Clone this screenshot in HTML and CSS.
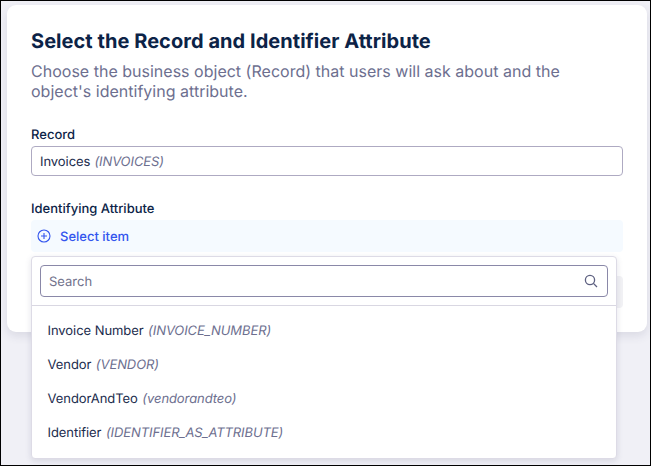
FILE: index.html
```html
<!DOCTYPE html>
<html lang="en">
<head>
<meta charset="utf-8">
<title>Select the Record and Identifier Attribute</title>
<link rel="stylesheet" href="styles.css">
</head>
<body>
<div class="frame">
  <main class="card">
    <h1 class="title">Select the Record and Identifier Attribute</h1>
    <p class="intro">Choose the business object (Record) that users will ask about and the object's identifying attribute.</p>
    <div class="field">
      <label class="label">Record</label>
      <div class="input"><span>Invoices</span> <em>(INVOICES)</em></div>
    </div>
    <div class="field attr">
      <label class="label">Identifying Attribute</label>
      <div class="select-row">
        <svg class="plus" width="14" height="14" viewBox="0 0 14 14" fill="none" stroke="#3355ee" stroke-width="1.1"><circle cx="7" cy="7" r="6"/><path d="M7 4v6M4 7h6"/></svg>
        <span>Select item</span>
      </div>
      <div class="hidden-bar"></div>
    </div>
  </main>
  <div class="dropdown">
    <div class="search-wrap">
      <div class="search">
        <span>Search</span>
        <svg width="14" height="14" viewBox="0 0 14 14" fill="none" stroke="#5d6080" stroke-width="1.3"><circle cx="6" cy="6" r="4.6"/><path d="M9.4 9.4l3.6 3.6"/></svg>
      </div>
    </div>
    <ul class="options">
      <li><span>Invoice Number</span> <em>(INVOICE_NUMBER)</em></li>
      <li><span>Vendor</span> <em>(VENDOR)</em></li>
      <li><span>VendorAndTeo</span> <em>(vendorandteo)</em></li>
      <li><span>Identifier</span> <em>(IDENTIFIER_AS_ATTRIBUTE)</em></li>
    </ul>
  </div>
</div>
</body>
</html>
```
FILE: styles.css
```css
* { box-sizing: border-box; }
html, body { margin: 0; padding: 0; }
body {
  width: 651px;
  height: 466px;
  overflow: hidden;
  font-family: Inter, "Liberation Sans", sans-serif;
  color: #0c2347;
  text-rendering: geometricPrecision;
}
.frame {
  position: relative;
  width: 651px;
  height: 466px;
  border: 1px solid #000;
  background: #f0f0f6;
  padding: 4px 3px 0 6px;
  overflow: hidden;
}
.card {
  height: 327px;
  background: #fff;
  border-radius: 9px;
  padding: 24px 24px 0;
  box-shadow: 0 4px 10px rgba(60, 60, 100, 0.12);
}
.title {
  margin: 0;
  font-size: 20px;
  line-height: 24px;
  font-weight: 700;
  letter-spacing: 0.05px;
  color: #0c2347;
}
.intro {
  margin: 8px 0 0;
  font-size: 16px;
  line-height: 20px;
  letter-spacing: 0.01px;
  color: #6d6f8f;
}
.field { margin-top: 26px; }
.attr { margin-top: 25px; }
.label {
  display: block;
  font-size: 13px;
  line-height: 16px;
  font-weight: 500;
  color: #0c2347;
}
.input {
  margin-top: 3px;
  height: 30px;
  border: 1px solid #aeaac2;
  border-radius: 4px;
  padding: 1px 8px 0;
  display: flex;
  align-items: center;
  gap: 4px;
  font-size: 13px;
  letter-spacing: -0.06px;
  color: #1b2c4d;
}
em {
  font-style: italic;
  letter-spacing: -0.08px;
  color: #6d6f8f;
}
.select-row {
  margin-top: 3px;
  height: 32px;
  background: #f5faff;
  border-radius: 4px;
  padding: 1px 6px 0;
  display: flex;
  align-items: center;
  gap: 9px;
  font-size: 13px;
  font-weight: 500;
  color: #3355ee;
}
.plus { margin-top: -1px; }
.hidden-bar {
  margin-top: 24px;
  height: 32px;
  background: #f2f2f5;
  border-radius: 4px;
}
.dropdown {
  position: absolute;
  left: 30px;
  top: 255px;
  width: 586px;
  height: 203px;
  background: #fff;
  border: 1px solid #dddbe6;
  border-radius: 4px;
  box-shadow: 0 2px 6px rgba(60, 60, 100, 0.14);
}
.search-wrap {
  padding: 8px;
  border-bottom: 1px solid #d9d7e2;
}
.search {
  height: 32px;
  border: 1px solid #8a88a8;
  border-radius: 4px;
  padding: 1px 9px 0 8px;
  display: flex;
  align-items: center;
  justify-content: space-between;
  font-size: 13px;
  color: #71728c;
}
.search svg { margin-top: -2px; }
.options {
  list-style: none;
  margin: 0;
  padding: 8px 0 0;
}
.options li {
  height: 34px;
  padding: 0 15.5px;
  display: flex;
  align-items: center;
  gap: 4.5px;
  font-size: 13px;
  letter-spacing: -0.06px;
  color: #1b2c4d;
}
```
